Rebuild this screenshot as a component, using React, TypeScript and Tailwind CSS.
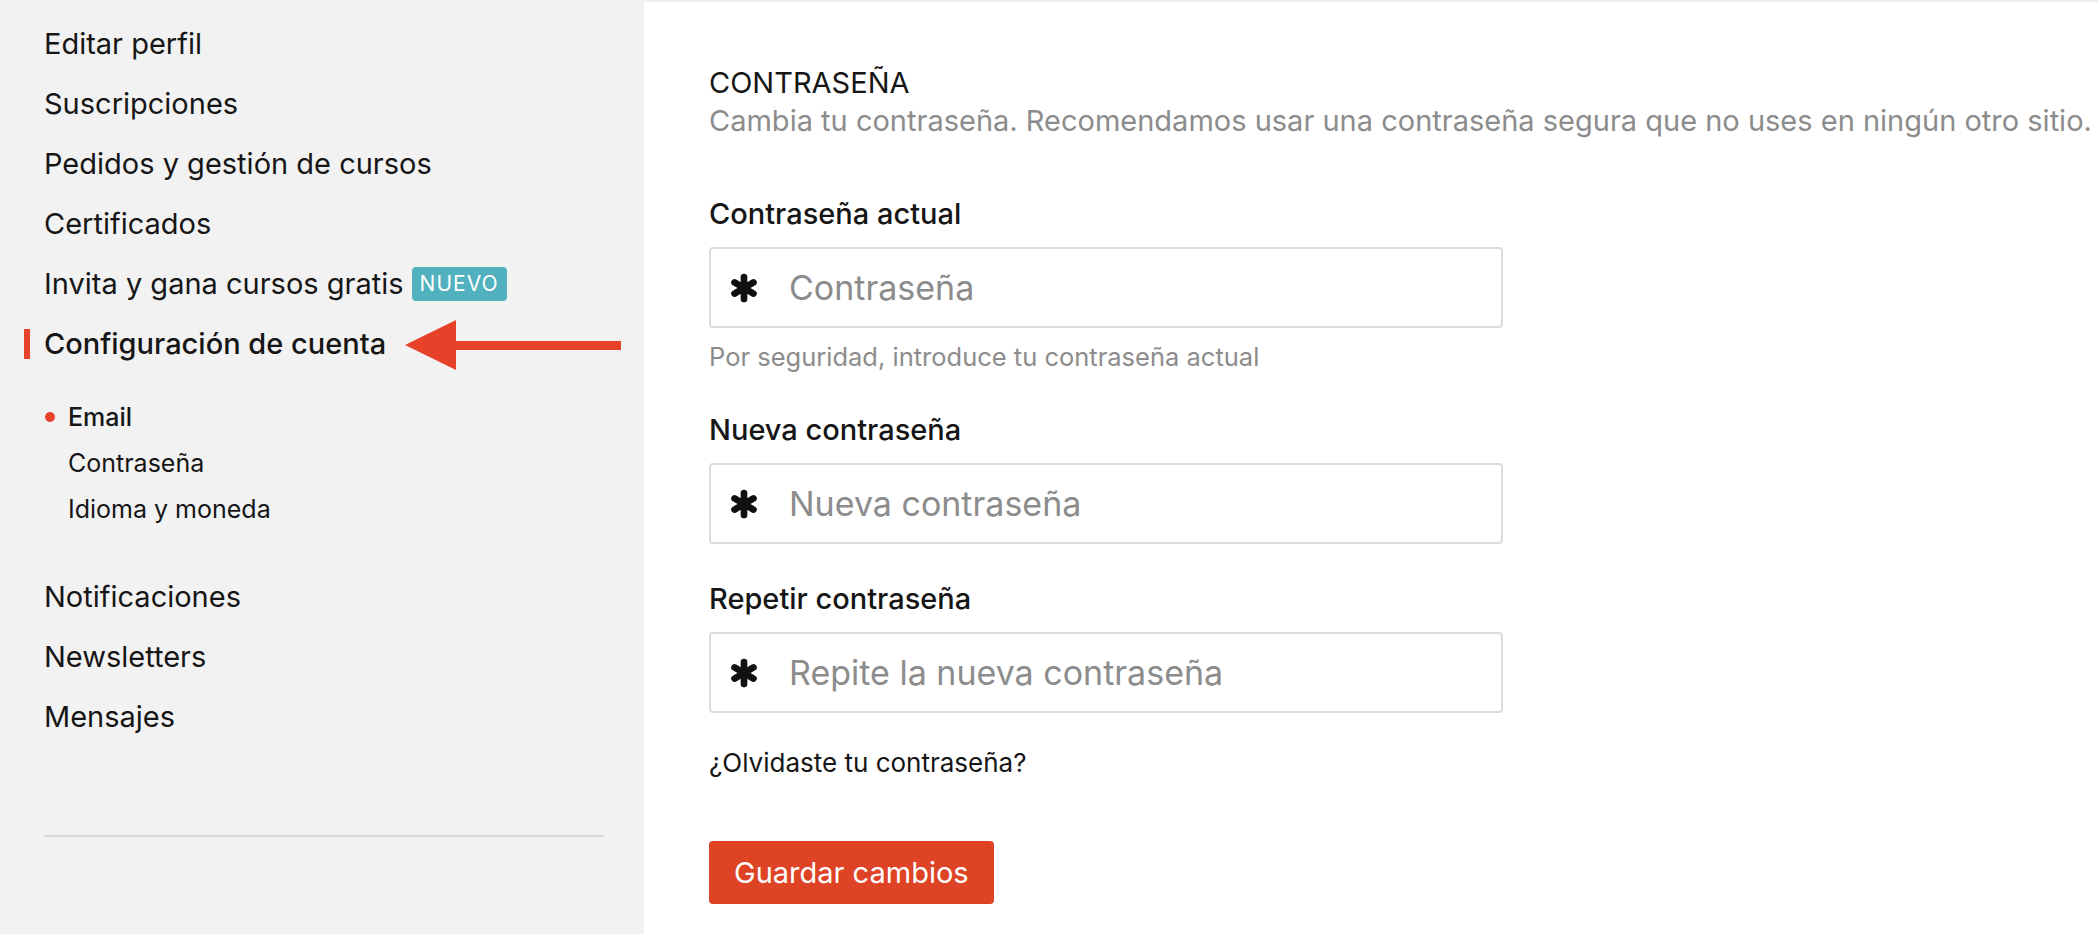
const font = { fontFamily: "Inter, 'Noto Sans', sans-serif" };

function Asterisk() {
  return (
    <svg width="28" height="30" viewBox="0 0 24 26" className="shrink-0">
      <g stroke="#111" strokeWidth="5.8" strokeLinecap="round">
        <line x1="12" y1="3.5" x2="12" y2="22.5" />
        <line x1="3.8" y1="8.2" x2="20.2" y2="17.8" />
        <line x1="3.8" y1="17.8" x2="20.2" y2="8.2" />
      </g>
    </svg>
  );
}

function PasswordField({ label, placeholder }: { label: string; placeholder: string }) {
  return (
    <div>
      <label className="block text-[29px] leading-[36px] font-medium text-[#161616]">{label}</label>
      <div className="mt-[15px] flex h-[81px] w-[794px] items-center gap-[31px] rounded-[4px] border-2 border-[#dcdcdc] bg-white pl-[19px]">
        <Asterisk />
        <input
          type="password"
          placeholder={placeholder}
          className="w-full bg-transparent text-[34px] text-[#222] outline-none placeholder:text-[#8c8c8c]"
        />
      </div>
    </div>
  );
}

export default function App() {
  const topLinks = [
    "Editar perfil",
    "Suscripciones",
    "Pedidos y gestión de cursos",
    "Certificados",
  ];
  const bottomLinks = ["Notificaciones", "Newsletters", "Mensajes"];
  const subLinks = ["Email", "Contraseña", "Idioma y moneda"];

  return (
    <div className="flex h-[934px] w-full text-[#161616]" style={font}>
      <aside className="relative w-[644px] shrink-0 bg-[#f2f2f2] pt-[14px]">
        <nav className="text-[29px] leading-[60px]">
          {topLinks.map((l) => (
            <div key={l} className="pl-[44px]">{l}</div>
          ))}
          <div className="flex items-center gap-[8px] pl-[44px]">
            <span>Invita y gana cursos gratis</span>
            <span className="rounded-[4px] bg-[#52b1bf] px-[8px] text-[21px] leading-[34px] tracking-[1px] text-white">
              NUEVO
            </span>
          </div>
          <div className="relative flex items-center pl-[44px] font-medium">
            <span className="absolute left-[24px] top-[15px] h-[30px] w-[6px] bg-[#e5432a]" />
            Configuración de cuenta
          </div>
          <ul className="mt-[20px] text-[25px] leading-[46px]">
            {subLinks.map((s, i) => (
              <li key={s} className="relative pl-[68px]">
                {i === 0 && (
                  <span className="absolute left-[45px] top-[18px] h-[10px] w-[10px] rounded-full bg-[#e5432a]" />
                )}
                <span className={i === 0 ? "font-medium" : ""}>{s}</span>
              </li>
            ))}
          </ul>
          <div className="mt-[35px]">
            {bottomLinks.map((l) => (
              <div key={l} className="pl-[44px]">{l}</div>
            ))}
          </div>
        </nav>
        <hr className="mx-[40px] ml-[44px] mt-[88px] border-t-2 border-[#d9d9d9]" />

        {/* annotation arrow */}
        <svg className="absolute left-[400px] top-[318px]" width="226" height="56" viewBox="0 0 226 56">
          <polygon points="5,27 56,2 56,52" fill="#e8412a" />
          <rect x="54" y="23" width="167" height="9" fill="#e8412a" />
        </svg>
      </aside>

      <main className="flex-1 border-t-2 border-[#f0f0f0] bg-white pl-[65px] pt-[63px]">
        <h1 className="text-[29px] leading-[36px] text-[#161616]">CONTRASEÑA</h1>
        <p className="text-[29px] leading-[40px] text-[#8c8c8c]">
          Cambia tu contraseña. Recomendamos usar una contraseña segura que no uses en ningún otro sitio.
        </p>

        <div className="mt-[55px]">
          <PasswordField label="Contraseña actual" placeholder="Contraseña" />
          <p className="mt-[14px] text-[25.5px] leading-[30px] text-[#8c8c8c]">
            Por seguridad, introduce tu contraseña actual
          </p>
        </div>

        <div className="mt-[40px]">
          <PasswordField label="Nueva contraseña" placeholder="Nueva contraseña" />
        </div>

        <div className="mt-[37px]">
          <PasswordField label="Repetir contraseña" placeholder="Repite la nueva contraseña" />
        </div>

        <p className="mt-[35px] text-[26px] leading-[30px] text-[#161616]">¿Olvidaste tu contraseña?</p>

        <button className="mt-[63px] h-[63px] rounded-[4px] bg-[#de4325] px-[25px] text-[29px] text-white">
          Guardar cambios
        </button>
      </main>
    </div>
  );
}
